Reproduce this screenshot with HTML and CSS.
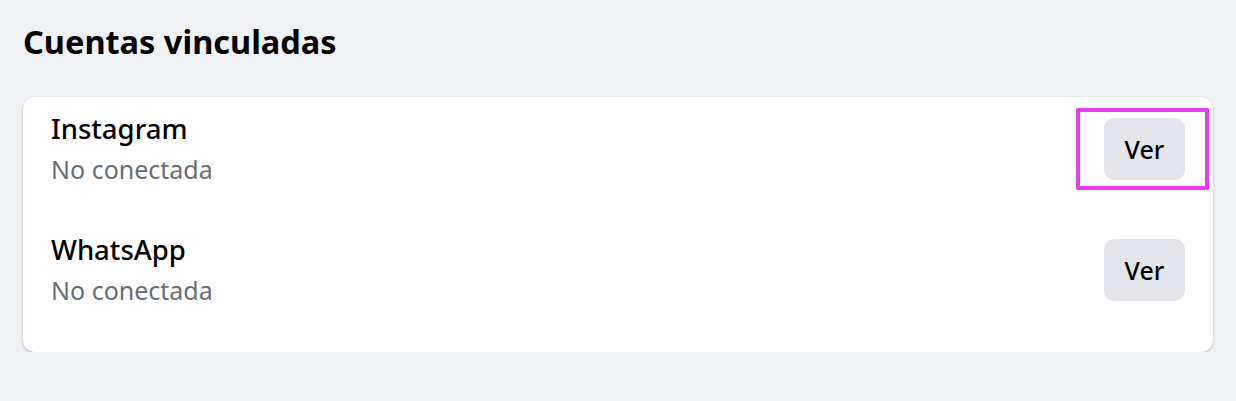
FILE: index.html
```html
<!DOCTYPE html>
<html lang="es">
<head>
<meta charset="utf-8">
<title>Cuentas vinculadas</title>
<link rel="stylesheet" href="styles.css">
</head>
<body>
<main class="page">
  <h1 class="heading">Cuentas vinculadas</h1>
  <section class="card">
    <div class="row">
      <div class="info">
        <div class="name">Instagram</div>
        <div class="status">No conectada</div>
      </div>
      <div class="action">
        <button class="btn" type="button">Ver</button>
        <span class="focus-ring"></span>
      </div>
    </div>
    <div class="row">
      <div class="info">
        <div class="name">WhatsApp</div>
        <div class="status">No conectada</div>
      </div>
      <div class="action">
        <button class="btn" type="button">Ver</button>
      </div>
    </div>
  </section>
</main>
</body>
</html>
```
FILE: styles.css
```css
html, body {
  margin: 0;
  padding: 0;
  background: #f0f1f5;
}
body {
  font-family: "Noto Sans", "Open Sans", sans-serif;
  color: #000;
}
.page {
  padding: 16px 23px 0 23px;
}
.heading {
  margin: 0;
  font-size: 32.5px;
  font-weight: 700;
  line-height: 52px;
}
.card {
  margin-top: 29px;
  width: 1190px;
  box-sizing: border-box;
  background: #fff;
  border-radius: 12px;
  box-shadow: 0 2px 3px rgba(0,0,0,0.18), 0 0 2px rgba(0,0,0,0.08);
  padding: 15px 28px 45px 28px;
  display: flex;
  flex-direction: column;
  gap: 47px;
}
.row {
  display: flex;
  align-items: center;
  justify-content: space-between;
}
.info {
  display: flex;
  flex-direction: column;
  gap: 6px;
}
.name {
  font-size: 27.5px;
  line-height: 34px;
  font-weight: 500;
}
.status {
  font-size: 25px;
  line-height: 34px;
  color: #6b6e73;
}
.action {
  position: relative;
}
.btn {
  width: 81px;
  height: 62px;
  border: none;
  border-radius: 10px;
  background: #e4e5ea;
  font-family: "Noto Sans", "Open Sans", sans-serif;
  font-size: 25px;
  font-weight: 500;
  color: #000;
  padding: 0;
}
.focus-ring {
  position: absolute;
  left: -28px;
  right: -24px;
  top: -10px;
  bottom: -10px;
  border: 4px solid #e63cf3;
  border-radius: 2px;
  pointer-events: none;
}
```
